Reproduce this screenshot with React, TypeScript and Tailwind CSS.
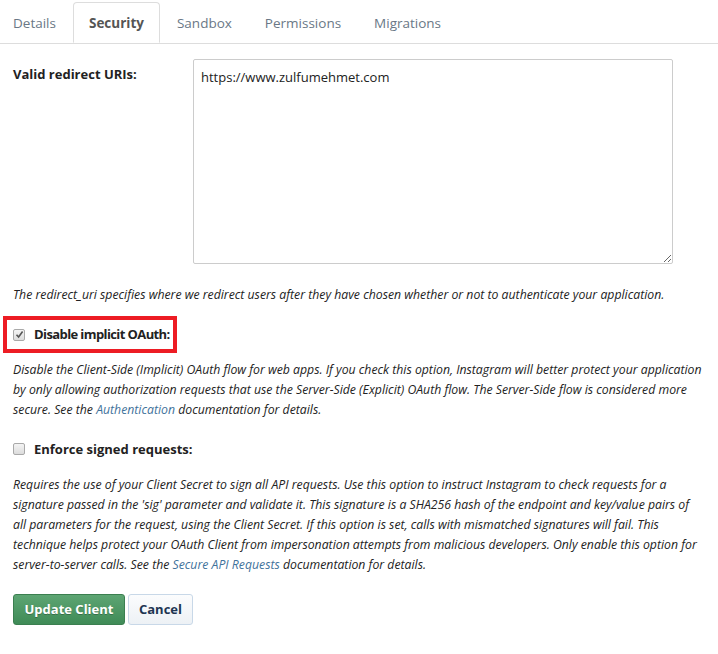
import React from 'react';

const tabs = ['Details', 'Security', 'Sandbox', 'Permissions', 'Migrations'];

function Box({ checked }: { checked?: boolean }) {
  return (
    <span className="flex h-[12px] w-[12px] shrink-0 items-center justify-center rounded-[2px] border border-[#a9a9a9] bg-gradient-to-b from-[#f4f4f4] to-[#dcdcdc]">
      {checked && (
        <svg width="9" height="9" viewBox="0 0 9 9">
          <path d="M1.5 4.8 L3.6 7 L7.6 1.6" fill="none" stroke="#555" strokeWidth="1.6" />
        </svg>
      )}
    </span>
  );
}

export default function App() {
  return (
    <div className="min-h-[654px] w-[718px] overflow-hidden bg-white text-[#222]" style={{ fontFamily: '"Open Sans", sans-serif' }}>
      {/* tabs */}
      <div className="flex h-[44px] items-end border-b border-[#ddd]">
        <div className="ml-[-3px] flex gap-[1px]">
          {tabs.map((t) => (
            <div
              key={t}
              className={
                t === 'Security'
                  ? 'mb-[-1px] flex h-[41px] items-center rounded-t-[4px] border border-[#ddd] border-b-white bg-white px-[15px] pt-[2px] text-[13.5px] font-bold text-[#555]'
                  : 'flex h-[41px] items-center border border-transparent px-[15px] pt-[2px] text-[13.5px] text-[#6a7886]'
              }
            >
              {t}
            </div>
          ))}
        </div>
      </div>

      <div className="pl-[13px] pr-[13px]">
        {/* redirect URIs */}
        <div className="mt-[15px] flex">
          <div className="w-[180px] pt-[5px] text-[13px] font-bold leading-[20px]">Valid redirect URIs:</div>
          <textarea
            defaultValue="https://www.zulfumehmet.com"
            className="h-[205px] w-[480px] resize rounded-[2px] border border-[#ccc] px-[7px] py-[7px] text-[13px] leading-[20px] text-[#222] outline-none"
            style={{ fontFamily: '"Open Sans", sans-serif' }}
          />
        </div>
        <p className="mt-[21px] text-[12.25px] italic leading-[20px]">
          The redirect_uri specifies where we redirect users after they have chosen whether or not to authenticate your application.
        </p>

        {/* implicit oauth */}
        <div className="ml-[-10px] mt-[11px] flex h-[37px] w-fit items-center gap-[9px] border-[4px] border-[#ed1c24] pl-[6px] pr-[3px]">
          <Box checked />
          <span className="whitespace-nowrap text-[13px] font-bold tracking-[-0.6px]">Disable implicit OAuth:</span>
        </div>
        <p className="mr-[-8px] mt-[7px] text-[12.25px] italic leading-[20px]">
          Disable the Client-Side (Implicit) OAuth flow for web apps. If you check this option, Instagram will better protect your application by only allowing authorization requests that use the Server-Side (Explicit) OAuth flow. The Server-Side flow is considered more secure. See the{' '}
          <span className="text-[#3f729b]">Authentication</span> documentation for details.
        </p>

        {/* signed requests */}
        <div className="mt-[19px] flex items-center gap-[9px]">
          <Box />
          <span className="text-[13px] font-bold leading-[20px]">Enforce signed requests:</span>
        </div>
        <p className="mt-[16px] text-[12.25px] italic leading-[20px]">
          Requires the use of your Client Secret to sign all API requests. Use this option to instruct Instagram to check requests for a signature passed in the 'sig' parameter and validate it. This signature is a SHA256 hash of the endpoint and key/value pairs of all parameters for the request, using the Client Secret. If this option is set, calls with mismatched signatures will fail. This technique helps protect your OAuth Client from impersonation attempts from malicious developers. Only enable this option for server-to-server calls. See the{' '}
          <span className="text-[#3f729b]">Secure API Requests</span> documentation for details.
        </p>

        {/* buttons */}
        <div className="mt-[19px] flex gap-[3px]">
          <button className="h-[31px] w-[112px] rounded-[3px] border border-[#3b7f50] bg-gradient-to-b from-[#5da573] to-[#3f8b57] text-[13px] font-bold text-white [text-shadow:0_1px_0_rgba(0,0,0,0.25)]">
            Update Client
          </button>
          <button className="h-[31px] w-[65px] rounded-[3px] border border-[#c8d8e8] bg-gradient-to-b from-[#fbfcfd] to-[#edf1f5] text-[13px] font-bold text-[#1e3552]">
            Cancel
          </button>
        </div>
      </div>
    </div>
  );
}
